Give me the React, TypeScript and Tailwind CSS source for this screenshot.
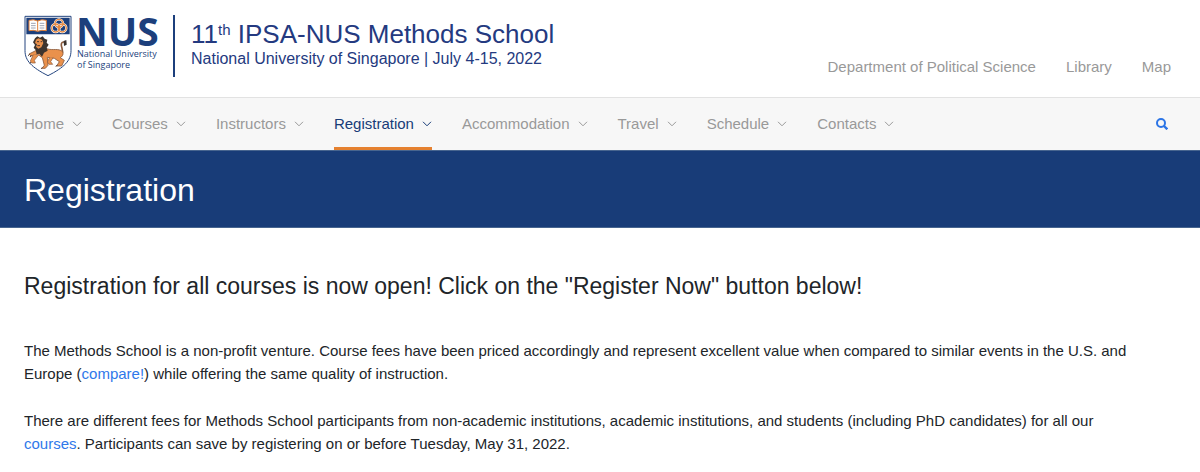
import React from "react";

const navItems: string[] = [
  "Home",
  "Courses",
  "Instructors",
  "Registration",
  "Accommodation",
  "Travel",
  "Schedule",
  "Contacts",
];

function Chevron() {
  return (
    <svg width="10" height="6" viewBox="0 0 10 6" fill="none" stroke="currentColor" aria-hidden="true">
      <path d="M1 0.8 5 4.8 9 0.8" />
    </svg>
  );
}

function Crest() {
  return (
    <svg width="48" height="62" viewBox="24 21 144 186" aria-hidden="true" className="shrink-0">
      <path d="M27 25H165V128C165 158 145 178 96 203C47 178 27 158 27 128Z" fill="#fff" stroke="#24457f" strokeWidth="3" />
      <path d="M31 29H161V79H31Z" fill="#1c3f7c" />
      <g stroke="#e07f38" strokeWidth="3">
        <path d="M39 37Q53 33 65 39Q77 33 91 37V68Q77 65 65 70Q53 65 39 68Z" fill="#fff" />
        <path d="M65 39V70" />
        <path d="M45 46H59M45 53H59M45 60H59M71 46H85M71 53H85M71 60H85" stroke="#8c91a5" strokeWidth="2.5" />
      </g>
      <g fill="none">
        <g stroke="#fff" strokeWidth="7">
          <circle cx="129" cy="46" r="12" />
          <circle cx="119" cy="60" r="12" />
          <circle cx="139" cy="60" r="12" />
        </g>
        <g stroke="#e58a43" strokeWidth="4">
          <circle cx="129" cy="46" r="12" />
          <circle cx="119" cy="60" r="12" />
          <circle cx="139" cy="60" r="12" />
        </g>
      </g>
      <path
        d="M137 141C145 124 134 119 136 108C138 99 149 101 146 109"
        fill="none"
        stroke="#8a5a3c"
        strokeWidth="5"
      />
      <path d="M143 99L151 96L152 110L144 114Z" fill="#3a342f" />
      <path
        d="M87 119C103 130 122 120 136 128C145 134 141 144 133 149L145 157L137 174H122L130 161L115 151L94 148L96 172L88 181H78L85 172L79 149L65 139L45 144L39 138L63 126Z"
        fill="#ea914c"
        stroke="#8a5a3c"
        strokeWidth="2.5"
        strokeLinejoin="round"
      />
      <path d="M68 141L55 157L58 165H47L43 159L52 140M111 149L104 161L110 169H99L94 162L101 148" fill="#ea914c" stroke="#8a5a3c" strokeWidth="2" />
      <path
        d="M57 91L64 85L72 89L80 85L86 92L94 95L92 104L98 110L92 119L95 128L84 134L78 146L70 137L62 139L59 126L53 119L57 111L51 103Z"
        fill="#3e342e"
      />
      <path d="M60 95L67 91L78 95L82 105L76 118L67 122L60 116L63 109L57 105Z" fill="#ea914c" />
      <path d="M63 101H69M74 101H78M64 113H72" stroke="#4b352d" strokeWidth="3" />
      <path d="M41 139L36 143M46 142L42 147M45 163L41 166M79 179L75 182M124 172L119 175" stroke="#4b352d" strokeWidth="3" />
    </svg>
  );
}

export default function App() {
  return (
    <div className="min-h-screen bg-white font-['Liberation_Sans',Arial,sans-serif] text-[#212529]">
      <header className="flex h-[97px] items-start justify-between px-6 pt-[15px]">
        <a href="#home" className="flex items-start text-[#1c3f7c]">
          <Crest />
          <span className="ml-1 flex w-[99px] flex-col border-r-2 border-[#1c3f7c] pb-[7px] font-['Open_Sans',sans-serif]">
            <span className="text-[39px] leading-[31px] font-bold">NUS</span>
            <span className="mt-[2px] pl-px text-[9px] leading-[11px] font-medium whitespace-nowrap">
              National University
              <br />
              of Singapore
            </span>
          </span>
          <span className="ml-4 flex flex-col pt-1 whitespace-nowrap text-[#243a80]">
            <span className="text-[26px] leading-[30px]">
              11<sup className="-top-2 text-[15px]">th</sup> IPSA-NUS Methods School
            </span>
            <span className="text-[16px] leading-5">National University of Singapore | July 4-15, 2022</span>
          </span>
        </a>
        <div className="flex gap-[30px] pt-[42px] pr-[5px] text-[15px] leading-5 text-[#999]">
          <a href="#department">Department of Political Science</a>
          <a href="#library">Library</a>
          <a href="#map">Map</a>
        </div>
      </header>

      <nav className="flex h-[53px] items-stretch justify-between border-t border-[#e2e2e2] bg-[#f7f7f7] px-6">
        <ul className="flex gap-[30px]">
          {navItems.map((item) => (
            <li key={item} className="flex">
              <a
                href={"#" + item.toLowerCase()}
                aria-current={item === "Registration" ? "page" : undefined}
                className={
                  item === "Registration"
                    ? "flex items-center gap-2 border-b-[3px] border-[#e58130] pt-[3px] text-[15px] text-[#183c78]"
                    : "flex items-center gap-2 text-[15px] text-[#999]"
                }
              >
                {item}
                <Chevron />
              </a>
            </li>
          ))}
        </ul>
        <button type="button" aria-label="Search" className="mr-2 flex items-center text-[#2c75e6]">
          <svg width="12" height="12" viewBox="0 0 12 12" fill="none" stroke="currentColor" strokeWidth="2" aria-hidden="true">
            <circle cx="5" cy="5" r="4" />
            <path d="M8 8 11.3 11.3" strokeWidth="2.4" />
          </svg>
        </button>
      </nav>

      <div className="border-y border-[#47658f] bg-[#183c78] px-6 pt-5 pb-[18px] text-white">
        <h1 className="text-[32px] leading-[38px]">Registration</h1>
      </div>

      <main className="px-6 pt-11">
        <h2 className="text-[23px] leading-7">
          Registration for all courses is now open! Click on the "Register Now" button below!
        </h2>
        <p className="mt-[39px] mr-10 text-[15px] leading-[23px]">
          The Methods School is a non-profit venture. Course fees have been priced accordingly and represent excellent
          value when compared to similar events in the U.S. and Europe (
          <a href="#compare" className="text-[#2f78ea]">compare!</a>) while offering the same quality of instruction.
        </p>
        <p className="mt-6 mr-10 text-[15px] leading-[23px]">
          There are different fees for Methods School participants from non-academic institutions, academic
          institutions, and students (including PhD candidates) for all our{" "}
          <a href="#courses" className="text-[#2f78ea]">courses</a>. Participants can save by registering on or before
          Tuesday, May 31, 2022.
        </p>
      </main>
    </div>
  );
}
